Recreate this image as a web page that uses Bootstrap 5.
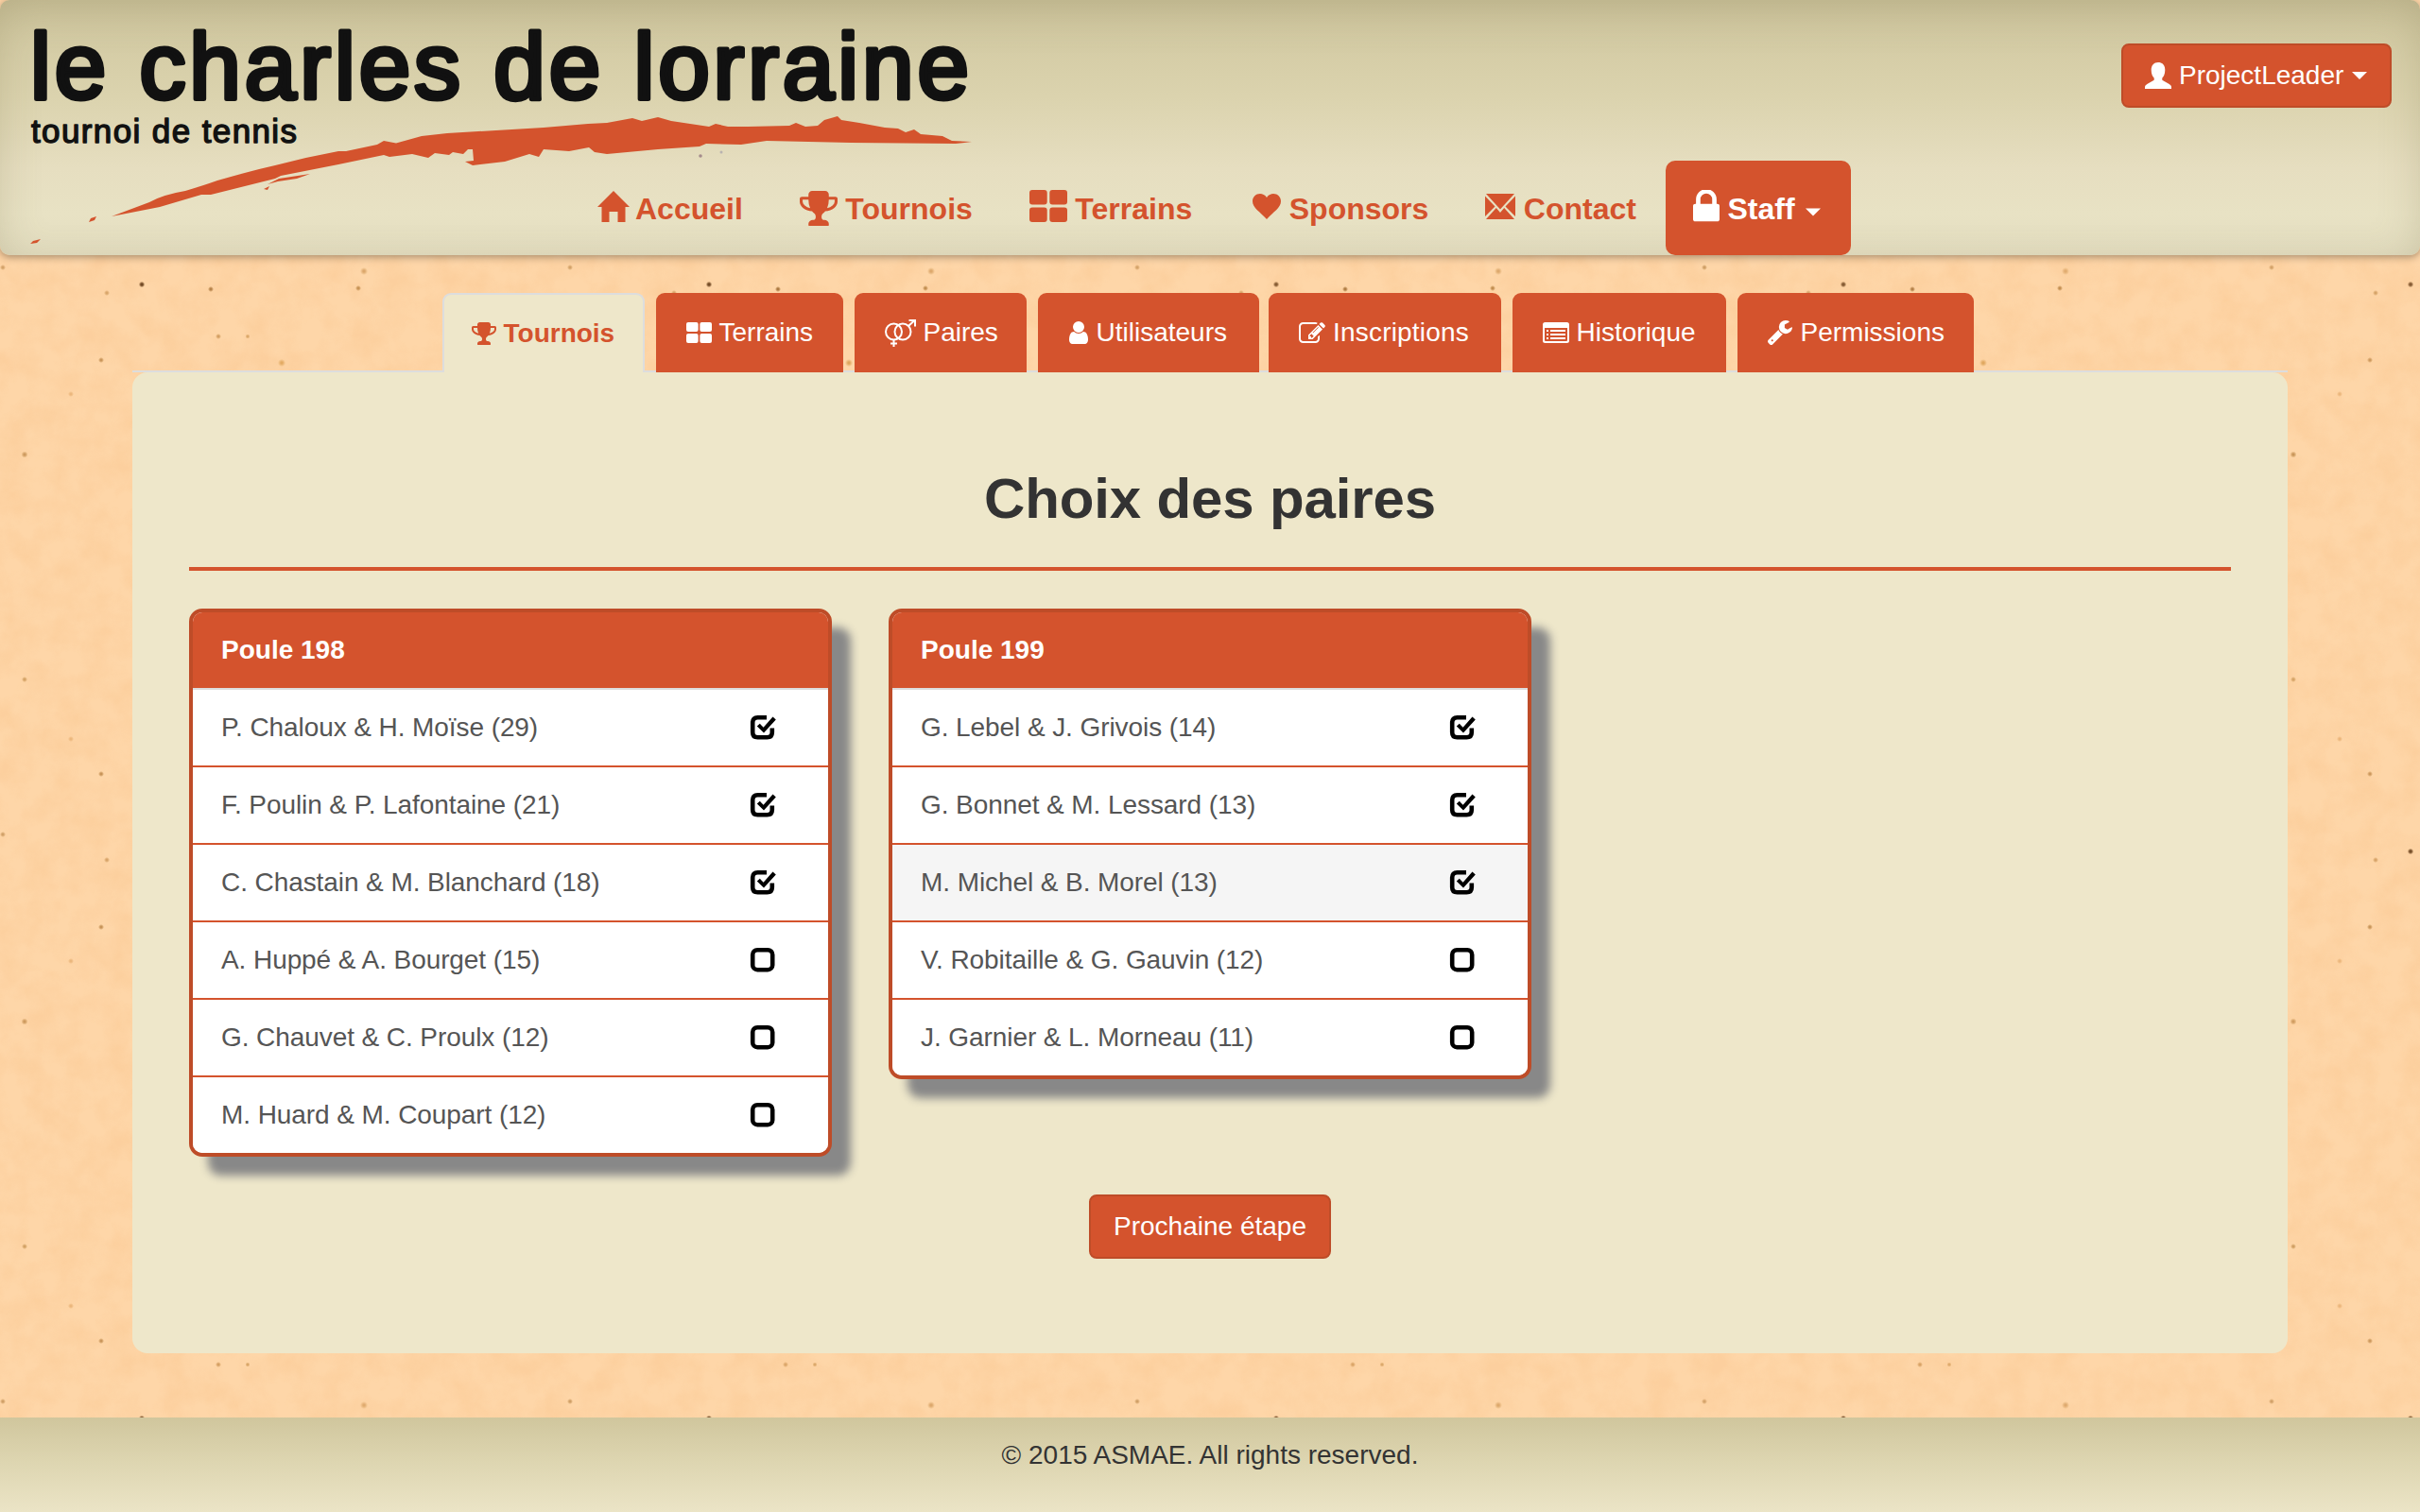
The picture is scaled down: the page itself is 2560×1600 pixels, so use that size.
<!DOCTYPE html>
<html lang="fr">
<head>
<meta charset="utf-8">
<title>Le Charles de Lorraine - Choix des paires</title>
<link rel="stylesheet" href="https://cdn.jsdelivr.net/npm/bootstrap@5.3.0/dist/css/bootstrap.min.css">
<style>
:root{--brick:#d4532d;--brick-dark:#be4c28;--sand:#eee7ca}
body{font-family:"Liberation Sans",Arial,sans-serif;font-size:28px;line-height:40px;color:#333;min-height:1600px;
 background-color:#fed6a8;
 background-image:
  radial-gradient(circle at 150px 301px,#6b4420 0 1.2px,transparent 3.2px),
  radial-gradient(circle at 223px 306px,#a9773f 0 1px,transparent 3px),
  radial-gradient(circle at 379px 305px,#bd8a4c 0 1px,transparent 3px),
  radial-gradient(circle at 113px 310px,#d4a267 0 1px,transparent 3px),
  radial-gradient(circle at 231px 356px,#d4a063 0 1px,transparent 3px),
  radial-gradient(circle at 262px 356px,#d8a668 0 1px,transparent 2.5px),
  radial-gradient(circle at 231px 244px,#d4a063 0 1px,transparent 3px),
  radial-gradient(circle at 262px 244px,#d8a668 0 1px,transparent 2.5px),
  radial-gradient(circle at 107px 381px,#c79458 0 1px,transparent 3px),
  radial-gradient(circle at 107px 219px,#c79458 0 1px,transparent 3px),
  radial-gradient(circle at 298px 384px,#dea65c 0 1px,transparent 4px),
  radial-gradient(circle at 26px 481px,#c9965a 0 1px,transparent 3.5px),
  radial-gradient(circle at 385px 287px,#dca86c 0 1px,transparent 4px),
  radial-gradient(circle at 3px 283px,#cf9f66 0 1px,transparent 3px),
  radial-gradient(circle at 75px 417px,#eab67c 0 1px,transparent 3px),
  radial-gradient(circle at 75px 182px,#eab67c 0 1px,transparent 3px),
  radial-gradient(circle at 26px 119px,#d0a063 0 1px,transparent 3px);
 background-size:600px 600px}
.grain{z-index:-1;pointer-events:none}
svg{display:block;flex:none}
.ico{fill:currentColor}
.site-head{height:270px;border-radius:10px;background:linear-gradient(#cfc69e 0,#dbd3ae 38%,#e6dec0 66%,#e8e2c4 84%,#e3ddc0 100%);
 box-shadow:inset 0 12px 50px -8px rgba(120,110,70,.3),0 2px 8px rgba(0,0,0,.35)}
.brand-mark{left:0;top:0}
.brand-mark text{fill:#111;stroke:#111;stroke-linejoin:round}
.main-links{padding-left:632px;gap:60px;height:100px}
.main-links a{color:var(--brick);font-weight:700;font-size:32px;line-height:100px;padding:0;gap:8.5px}
.main-links a span{padding-top:1px}
.main-links a:first-child{gap:6px}
.main-links .sponsor-link{margin-left:4px}
.main-links .staff-link{background:var(--brick);color:#fff;border-radius:10px;width:196px;margin-left:-29px;padding-left:29px}
.staff-link svg:last-child{margin-left:3px}
.btn-brick{--bs-btn-color:#fff;--bs-btn-bg:#d4532d;--bs-btn-border-color:#be4c28;--bs-btn-hover-color:#fff;--bs-btn-hover-bg:#be4c28;
 height:68px;border-width:2px;border-radius:8px;font-size:28px;line-height:40px;padding:12px 24px}
.user-btn{right:30px;top:46px;width:286px;padding-left:23px;gap:8px}
.user-btn svg:last-child{margin-left:1px}
.sheet-wrap{width:2280px}
.sheet-tabs{height:84px;margin-top:40px;gap:12px;border-bottom:2px solid #ddd;padding-left:328px}
.sheet-tabs a{height:84px;border-radius:9px 9px 0 0;border:0;background:var(--brick);color:#fff;padding:0 0 0 32px;gap:7.5px;line-height:40px}
.sheet-tabs a.active{background:var(--sand);color:var(--brick);font-weight:700;border:2px solid #ddd;border-bottom:0;padding-left:29px}
.w1{width:214px}.w2{width:198px}.w3{width:182px}.w4{width:234px}.w5{width:246px;margin-left:-2px}.w6{width:226px}.w7{width:250px}
.sheet-tabs .w5{gap:8px;letter-spacing:.2px}.sheet-tabs .w7{gap:8.5px}
.sheet{background:var(--sand);border-radius:16px;height:1038px;padding:0 60px}
.sheet h1{font-size:60px;line-height:66px;font-weight:700;padding-top:101px;height:210px;border-bottom:4px solid var(--brick);margin:0;letter-spacing:-.15px}
.pools{padding-top:40px;gap:60px;height:620px}
.pool{width:680px;border:4px solid var(--brick-dark);border-radius:14px;box-shadow:20px 20px 10px #888;overflow:hidden;background:#fff}
.pool .card-header{background:var(--brick);color:#fff;font-weight:700;height:82px;padding:20px 30px;border-bottom:2px solid #ddd;border-radius:0}
.pool .list-group-item{height:82px;padding:0 55px 0 30px;color:#555;border:0;border-bottom:2px solid var(--brick);border-radius:0;background:#fff;letter-spacing:-.08px}
.pool .list-group-item:last-child{border-bottom:0;height:80px}
.pool .list-group-item.hovered{background:#f5f5f5}
.pool svg{color:#000}
.next-step{padding-top:40px}
.site-foot{height:100px;margin-top:68px;padding-top:20px;background:linear-gradient(#d0c69d,#ddd5b0 45%,#ebe4c6)}
</style>
<script src="https://cdn.jsdelivr.net/npm/bootstrap@5.3.0/dist/js/bootstrap.bundle.min.js"></script>
</head>
<body>
<svg class="grain position-absolute top-0 start-0" width="2560" height="1600">
 <filter id="paper" x="0" y="0" width="100%" height="100%" color-interpolation-filters="sRGB"><feTurbulence type="fractalNoise" baseFrequency=".035" numOctaves="5" seed="7"/><feColorMatrix values="0 0 0 0 .97  0 0 0 0 .75  0 0 0 0 .52  0 2 0 0 -.65"/></filter>
 <rect width="2560" height="1600" filter="url(#paper)" opacity=".28"/>
</svg>
<svg class="d-none">
 <symbol id="trophy" viewBox="64 128 1664 1536"><path d="M522 883q-74-162-74-371h-256v96q0 78 94.500 162t235.500 113zm1078-275v-96h-256q0 209-74 371 141-29 235.500-113t94.500-162zm128-128v128q0 71-41.500 143t-112 130-173 97.500-215.500 44.500q-42 54-95 95-38 34-52.500 72.500t-14.500 89.500q0 54 30.500 91t97.500 37q75 0 133.500 45.500t58.500 114.500v64q0 14-9 23t-23 9h-832q-14 0-23-9t-9-23v-64q0-69 58.500-114.500t133.500-45.500q67 0 97.500-37t30.500-91q0-51-14.500-89.500t-52.500-72.500q-53-41-95-95-113-5-215.500-44.500t-173-97.500-112-130-41.500-143v-128q0-40 28-68t68-28h288v-96q0-66 47-113t113-47h576q66 0 113 47t47 113v96h288q40 0 68 28t28 68z"/></symbol>
 <symbol id="grid" viewBox="0 0 40 34" preserveAspectRatio="none"><rect width="18.700" height="15.500" rx="3"/><rect x="21.300" width="18.700" height="15.500" rx="3"/><rect y="18.500" width="18.700" height="15.500" rx="3"/><rect x="21.300" y="18.500" width="18.700" height="15.500" rx="3"/></symbol>
 <symbol id="tick" viewBox="0 0 28 28"><path fill="none" stroke="currentColor" stroke-width="4.600" d="M18 3.200H8.500Q3.200 3.200 3.200 8.500v10.500q0 5.300 5.300 5.300h10q5.300 0 5.300-5.300v-4.500"/><path d="M7.800 12.500l3-2.700 3.800 4L24.500 2.500l3.300 3L15 19.500z"/></symbol>
 <symbol id="blank" viewBox="0 0 28 28"><rect x="3.200" y="3.200" width="21" height="21" rx="5" fill="none" stroke="currentColor" stroke-width="4.600"/></symbol>
</svg>

<header class="site-head position-relative d-flex flex-column justify-content-end">
 <svg class="brand-mark position-absolute" width="1050" height="270" viewBox="0 0 1050 270">
  <g fill="#d4532d">
  <path d="M118 229L158 214Q172 206 196 202 216 196 230 191 260 182 291 175 325 166 358 160L366 160 399 153 406 149 419 151.500 446 144 473 141 575 135 622 131 642 130 669 125 679 128 696 124 710 128 750 134 757 131 770 134 791 134 835 133 842 130 852 134 865 133 872 127 886 123 890 127 909 130 936 135 950 136 958 140 967 137 974 142 997 144 1007 149 1028 150 1011 152 900 151 811 149 784 153 747 152 740 155 696 158 642 163 629 161 623 156 602 160 575 158 570 166 560 163 534 171 500 175 492 171 501 170 500 158 495 158 490 163 479 161 475 164 460 162 453 167 436 163 412 166 406 164 358 174 297 186 291 189 223 206 213 206 169 219z"/>
  <path d="M283 195l12-6 33-5-14 5-20 3zM279 200l6-3-2 4zM94 235l2-4 6-2-2 4zM32 258l3-3 8-2-4 4z"/></g>
  <circle cx="741" cy="165" r="1.800" fill="#a48c8c"/><circle cx="763" cy="161" r="1.500" fill="#b9b3b0"/>
  <text x="32" y="104" font-size="98" stroke-width="5" textLength="993">le charles de lorraine</text>
  <text x="33" y="151" font-size="35" stroke-width="1.400" textLength="281">tournoi de tennis</text>
 </svg>
 <button class="btn btn-brick user-btn position-absolute d-flex align-items-center" type="button">
  <svg class="ico" width="28" height="28" viewBox="0 0 28 28"><path d="M14 0c4.500 0 7.300 3 7.300 8 0 4.500-1.600 7-3 8.500v2.300l7 4q2.700 1.500 2.700 3V28H0v-2.200q0-1.500 2.700-3l7-4v-2.300C8.300 15 6.700 12.500 6.700 8 6.700 3 9.500 0 14 0z"/></svg>
  <span>ProjectLeader</span><svg class="ico" width="16" height="8" viewBox="0 0 16 8"><path d="M0 0h16L8 8z"/></svg>
 </button>
 <nav class="main-links nav flex-nowrap">
  <a class="nav-link d-flex align-items-center" href="#"><svg class="ico mb-1" width="34" height="33" viewBox="0 0 34 33"><path d="M17 0l17 17h-4.500v16h-8V22h-9v11h-8V17H0z"/></svg><span>Accueil</span></a>
  <a class="nav-link d-flex align-items-center" href="#"><svg class="ico" width="40" height="37"><use href="#trophy"/></svg><span>Tournois</span></a>
  <a class="nav-link d-flex align-items-center" href="#"><svg class="ico mb-1" width="40" height="34"><use href="#grid"/></svg><span>Terrains</span></a>
  <a class="nav-link sponsor-link d-flex align-items-center" href="#"><svg class="ico mb-1" width="30" height="27" viewBox="0 0 30 27"><path d="M15 4C17 1 19.500 0 22 0c4.500 0 8 3.500 8 8 0 7-8 11-15 19C8 19 0 15 0 8c0-4.500 3.500-8 8-8 2.500 0 5 1 7 4z"/></svg><span>Sponsors</span></a>
  <a class="nav-link d-flex align-items-center" href="#"><svg class="ico mb-1" width="32" height="27" viewBox="0 0 32 27"><path d="M1 0h30L16 16.500zM0 2.500l10.500 11L0 24zM32 2.500V24L21.500 13.500zM11.800 15l4.200 5 4.200-5L31 27H1z"/></svg><span>Contact</span></a>
  <a class="nav-link staff-link d-flex align-items-center" href="#"><svg class="ico mb-1" width="28" height="34" viewBox="320 192 1152 1344"><path d="M640 768h512v-192q0-106-75-181t-181-75-181 75-75 181v192zm832 96v576q0 40-28 68t-68 28h-960q-40 0-68-28t-28-68v-576q0-40 28-68t68-28h32v-192q0-184 132-316t316-132 316 132 132 316v192h32q40 0 68 28t28 68z"/></svg><span>Staff</span><svg class="ico mt-2" width="16" height="9" viewBox="0 0 16 8"><path d="M0 0h16L8 8z"/></svg></a>
 </nav>
</header>

<main class="sheet-wrap mx-auto">
 <nav class="sheet-tabs nav flex-nowrap">
  <a class="nav-link active w1 d-flex align-items-center" href="#"><svg class="ico" width="26" height="24"><use href="#trophy"/></svg><span>Tournois</span></a>
  <a class="nav-link w2 d-flex align-items-center" href="#"><svg class="ico" width="27" height="22"><use href="#grid"/></svg><span>Terrains</span></a>
  <a class="nav-link w3 d-flex align-items-center" href="#"><svg width="33" height="29" viewBox="0 0 33 29" fill="none" stroke="currentColor" stroke-width="2"><circle cx="9.500" cy="13" r="8.500"/><circle cx="19" cy="13" r="8.500"/><path d="M9.500 21.500V29M6 25.500h7M25 7l6.500-6M25.500 1H32v6.500"/></svg><span>Paires</span></a>
  <a class="nav-link w4 d-flex align-items-center" href="#"><svg class="ico" width="22" height="24" viewBox="256 128 1280 1536"><path d="M1536 1399q0 109-62.500 187t-150.500 78h-854q-88 0-150.500-78t-62.500-187q0-85 8.500-160.500t31.500-152 58.500-131 94-89 134.500-34.500q131 128 313 128t313-128q76 0 134.500 34.500t94 89 58.500 131 31.500 152 8.500 160.500zm-256-887q0 159-112.500 271.500t-271.500 112.500-271.500-112.500-112.500-271.500 112.500-271.500 271.500-112.500 271.500 112.500 112.500 271.500z"/></svg><span>Utilisateurs</span></a>
  <a class="nav-link w5 d-flex align-items-center" href="#"><svg class="ico" width="28" height="22" viewBox="0 128 1792 1408"><path d="M888 1184l116-116-152-152-116 116v56h96v96h56zm440-720q-16-16-33 1l-350 350q-17 17-1 33t33-1l350-350q17-17 1-33zm80 594v190q0 119-84.500 203.500t-203.500 84.500h-832q-119 0-203.500-84.500t-84.500-203.500v-832q0-119 84.500-203.500t203.500-84.500h832q63 0 117 25 15 7 18 23 3 17-9 29l-49 49q-14 14-32 8-23-6-45-6h-832q-66 0-113 47t-47 113v832q0 66 47 113t113 47h832q66 0 113-47t47-113v-126q0-13 9-22l64-64q15-15 35-7t20 29zm-96-738l288 288-672 672h-288v-288zm444 132l-92 92-288-288 92-92q28-28 68-28t68 28l152 152q28 28 28 68t-28 68z"/></svg><span>Inscriptions</span></a>
  <a class="nav-link w6 d-flex align-items-center" href="#"><svg class="ico" width="28" height="22" viewBox="0 0 28 22"><path fill-rule="evenodd" d="M2.500 0h23Q28 0 28 2.500v17q0 2.500-2.500 2.500h-23Q0 22 0 19.500v-17Q0 0 2.500 0zM2 6v13q0 1 1 1h22q1 0 1-1V6z"/><path d="M4 8h2v2H4zM8 8h16v2H8zM4 12h2v2H4zM8 12h16v2H8zM4 16h2v2H4zM8 16h16v2H8z"/></svg><span>Historique</span></a>
  <a class="nav-link w7 d-flex align-items-center" href="#"><svg class="ico" width="26" height="26" viewBox="85 128 1643 1643"><path d="M448 1472q0-26-19-45t-45-19-45 19-19 45 19 45 45 19 45-19 19-45zm644-420l-682 682q-37 37-90 37-52 0-91-37l-106-108q-38-36-38-90 0-53 38-91l681-681q39 98 114.500 173.500t173.500 114.500zm634-435q0 39-23 106-47 134-164.500 217.500t-258.500 83.500q-185 0-316.500-131.500t-131.500-316.500 131.500-316.500 316.500-131.500q58 0 121.500 16.500t107.500 46.500q16 11 16 28t-16 28l-293 169v224l193 107q5-3 79-48.500t135.500-81 70.500-35.500q15 0 23.500 10t8.500 25z"/></svg><span>Permissions</span></a>
 </nav>
 <section class="sheet">
  <h1 class="text-center">Choix des paires</h1>
  <div class="pools d-flex align-items-start">
   <div class="card pool">
    <div class="card-header">Poule 198</div>
    <ul class="list-group list-group-flush">
     <li class="list-group-item d-flex align-items-center justify-content-between">P. Chaloux &amp; H. Moïse (29)<svg class="ico" width="28" height="28"><use href="#tick"/></svg></li>
     <li class="list-group-item d-flex align-items-center justify-content-between">F. Poulin &amp; P. Lafontaine (21)<svg class="ico" width="28" height="28"><use href="#tick"/></svg></li>
     <li class="list-group-item d-flex align-items-center justify-content-between">C. Chastain &amp; M. Blanchard (18)<svg class="ico" width="28" height="28"><use href="#tick"/></svg></li>
     <li class="list-group-item d-flex align-items-center justify-content-between">A. Huppé &amp; A. Bourget (15)<svg class="ico" width="28" height="28"><use href="#blank"/></svg></li>
     <li class="list-group-item d-flex align-items-center justify-content-between">G. Chauvet &amp; C. Proulx (12)<svg class="ico" width="28" height="28"><use href="#blank"/></svg></li>
     <li class="list-group-item d-flex align-items-center justify-content-between">M. Huard &amp; M. Coupart (12)<svg class="ico" width="28" height="28"><use href="#blank"/></svg></li>
    </ul>
   </div>
   <div class="card pool">
    <div class="card-header">Poule 199</div>
    <ul class="list-group list-group-flush">
     <li class="list-group-item d-flex align-items-center justify-content-between">G. Lebel &amp; J. Grivois (14)<svg class="ico" width="28" height="28"><use href="#tick"/></svg></li>
     <li class="list-group-item d-flex align-items-center justify-content-between">G. Bonnet &amp; M. Lessard (13)<svg class="ico" width="28" height="28"><use href="#tick"/></svg></li>
     <li class="list-group-item hovered d-flex align-items-center justify-content-between">M. Michel &amp; B. Morel (13)<svg class="ico" width="28" height="28"><use href="#tick"/></svg></li>
     <li class="list-group-item d-flex align-items-center justify-content-between">V. Robitaille &amp; G. Gauvin (12)<svg class="ico" width="28" height="28"><use href="#blank"/></svg></li>
     <li class="list-group-item d-flex align-items-center justify-content-between">J. Garnier &amp; L. Morneau (11)<svg class="ico" width="28" height="28"><use href="#blank"/></svg></li>
    </ul>
   </div>
  </div>
  <div class="next-step text-center"><button class="btn btn-brick" type="button">Prochaine étape</button></div>
 </section>
</main>
<footer class="site-foot text-center">© 2015 ASMAE. All rights reserved.</footer>
</body>
</html>
